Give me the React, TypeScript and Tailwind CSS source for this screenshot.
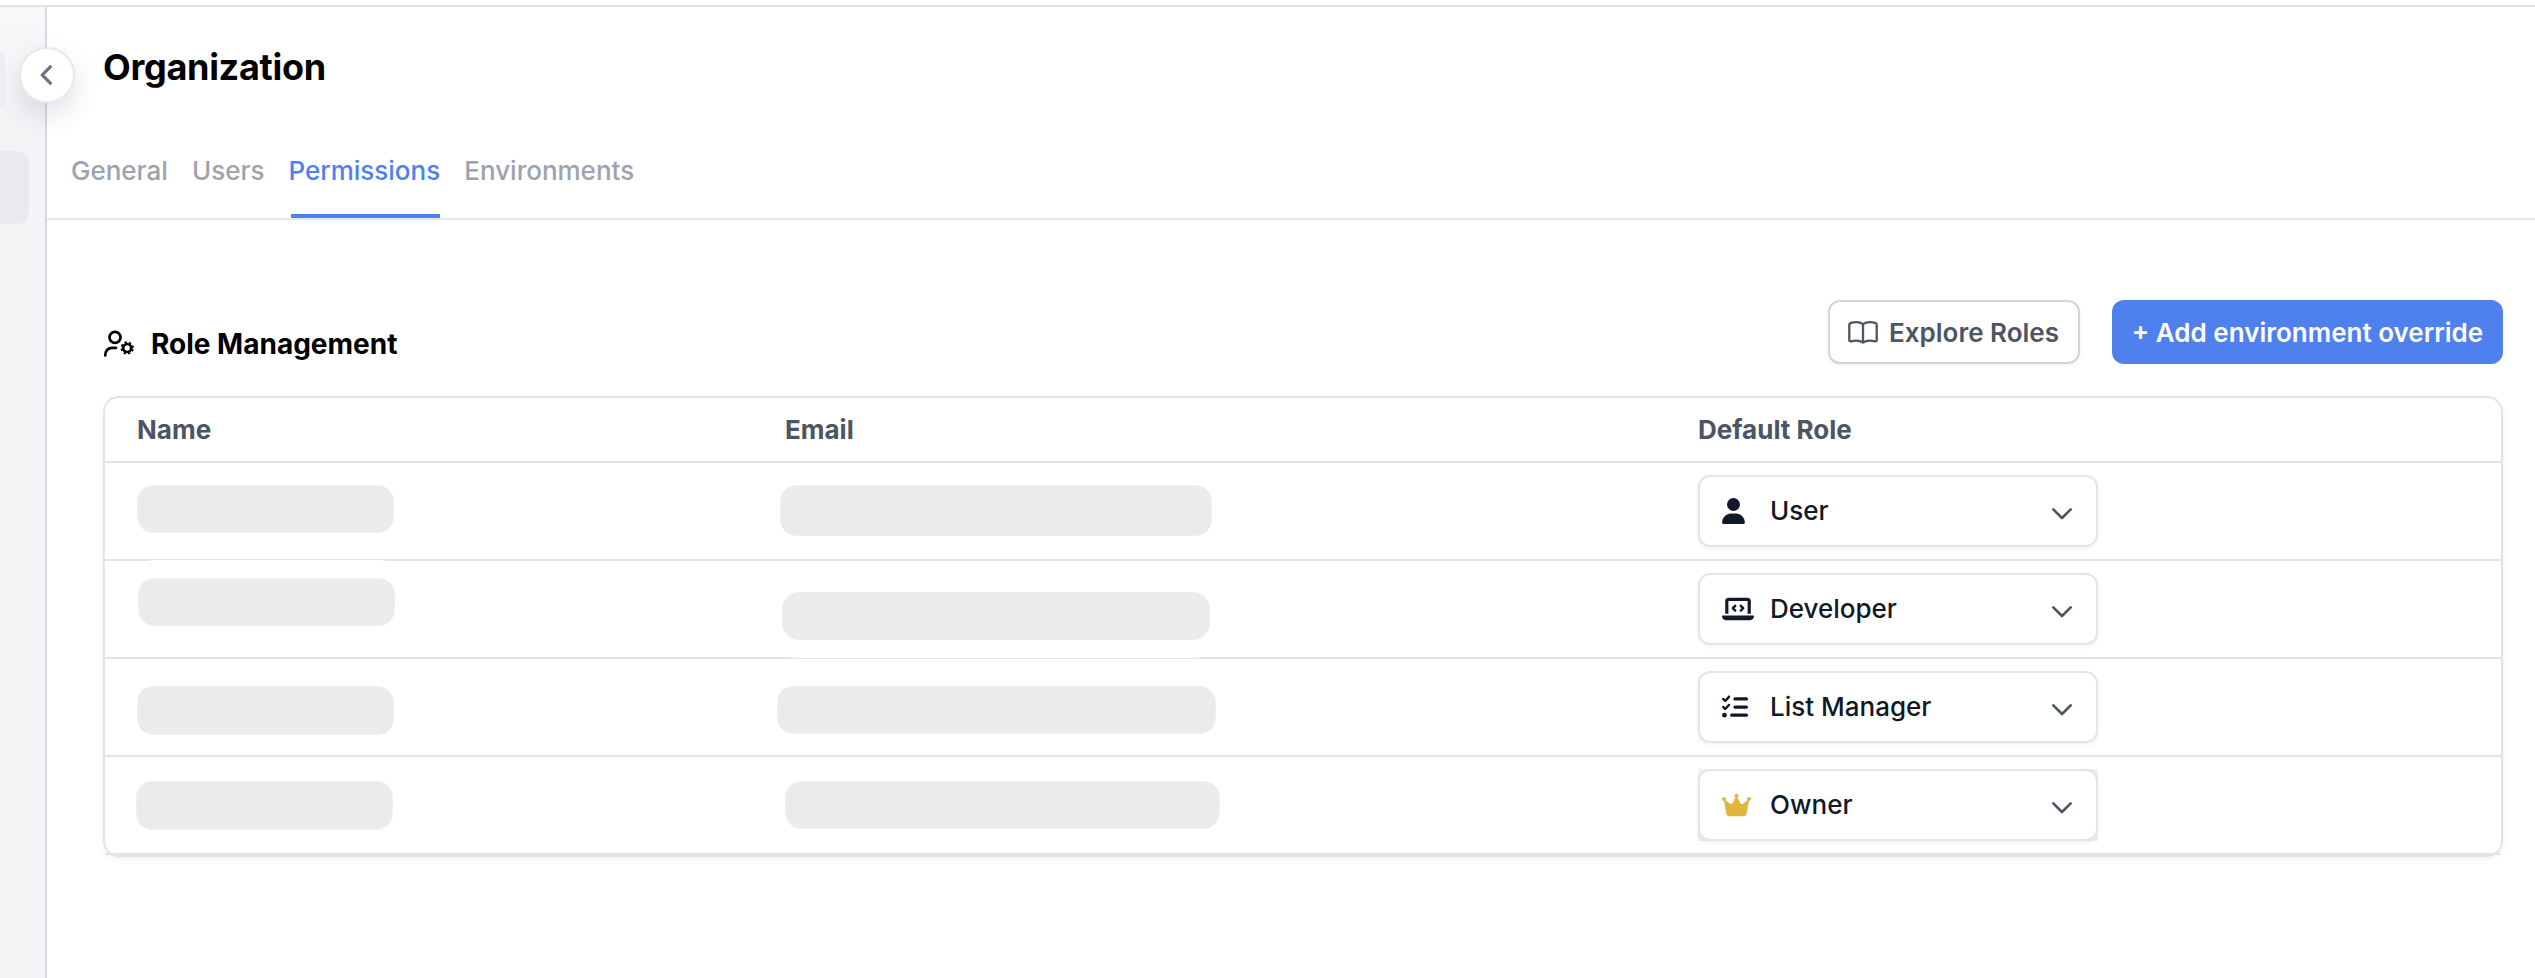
import { FaCrown, FaListCheck, FaLaptopCode, FaUser } from "react-icons/fa6";

interface Member {
  role: string;
  icon: React.ReactNode;
  nameClass: string;
  emailClass: string;
  selectClass?: string;
}

const tabs = ["General", "Users", "Permissions", "Environments"];

const members: Member[] = [
  {
    role: "User",
    icon: <FaUser className="h-[26px] w-[23px]" />,
    nameClass: "ml-8 mt-[22px] h-12 w-[257px]",
    emailClass: "-ml-1 mt-[22px] h-[51px] w-[432px]",
  },
  {
    role: "Developer",
    icon: <FaLaptopCode className="h-[26px] w-8" />,
    nameClass: "ml-[33px] mt-[17px] h-12 w-[257px]",
    emailClass: "-ml-0.5 mt-[31px] h-12 w-[428px]",
  },
  {
    role: "List Manager",
    icon: <FaListCheck className="size-[26px]" />,
    nameClass: "ml-8 mt-[27px] h-[49px] w-[257px]",
    emailClass: "-ml-[7px] mt-[27px] h-12 w-[439px]",
  },
  {
    role: "Owner",
    icon: <FaCrown className="h-[26px] w-[29px] text-[#e2b53e]" />,
    nameClass: "ml-[31px] mt-6 h-[49px] w-[257px]",
    emailClass: "ml-px mt-6 h-12 w-[435px]",
    selectClass: "bg-[#efefef]",
  },
];

function UserGearIcon() {
  return (
    <svg viewBox="0 0 32 28" className="h-7 w-8" fill="none" stroke="currentColor" strokeWidth="2.7" strokeLinecap="round">
      <circle cx="12" cy="7.4" r="5.5" />
      <path d="M2.3 25.5v-1a6.7 6.7 0 0 1 6.7-6.7h4" />
      <circle cx="24.2" cy="18" r="4" strokeWidth="2.7" />
      <circle
        cx="24.2"
        cy="18"
        r="5.7"
        strokeWidth="1.9"
        strokeLinecap="butt"
        strokeDasharray="2.24 2.24"
        transform="rotate(11.25 24.2 18)"
      />
    </svg>
  );
}

function BookIcon() {
  return (
    <svg viewBox="0 0 30 23" className="h-[23px] w-[30px]" fill="none" stroke="currentColor" strokeWidth="2.3" strokeLinejoin="round">
      <path d="M15 3.2C12.5 1.2 7 .9 2.8 1.9Q1.3 2.3 1.3 3.6V19.2Q1.3 20.6 2.9 20.3C7 19.4 12 19.4 15 21.6C18 19.4 23 19.4 27.1 20.3Q28.7 20.6 28.7 19.2V3.6Q28.7 2.3 27.2 1.9C23 .9 17.5 1.2 15 3.2ZM15 3.2V21.6" />
    </svg>
  );
}

function Skeleton({ className }: { className: string }) {
  return (
    <div className={`rounded-2xl border border-[#f0f0f0] bg-[#ebebeb] shadow-[0_0_0_18px_#fff] ${className}`} />
  );
}

function RoleSelect({ member }: { member: Member }) {
  return (
    <div className={`mt-3 h-[72px] w-[400px] ${member.selectClass ?? ""}`}>
      <button
        type="button"
        className="flex h-full w-full items-center rounded-xl border-2 border-[#e5e5e5] bg-white pl-[22px] pr-6 text-[#111827] shadow-[0_2px_4px_rgba(0,0,0,0.05)]"
      >
        <span className="flex w-8">{member.icon}</span>
        <span className="ml-4">{member.role}</span>
        <svg viewBox="0 0 20 12" className="ml-auto mt-[5px] h-3 w-5 text-[#4b5563]" fill="none" stroke="currentColor" strokeWidth="2.6" strokeLinecap="round" strokeLinejoin="round">
          <path d="M1.3 1.4 10 10l8.7-8.6" />
        </svg>
      </button>
    </div>
  );
}

export default function App() {
  return (
    <div className="flex h-[978px] flex-col bg-white pt-[5px] font-['Inter',sans-serif] text-[26px] font-medium leading-10">
      <div className="flex flex-1 border-t-2 border-[#e3e3e1]">
        <aside className="relative w-[47px] shrink-0 border-r-2 border-[#d5d8de] bg-[#f3f4f6] bg-linear-to-b from-[#f8f8fa] to-[#f3f4f6] to-[140px] pt-[43px]">
          <div className="h-[58px] w-[5px] rounded-r-xl bg-[#eeeff2]" />
          <div className="mt-[43px] h-[73px] w-[29px] rounded-r-xl bg-[#e8eaef]" />
          <button
            type="button"
            aria-label="Collapse"
            className="absolute left-[19px] top-10 flex size-14 items-center justify-center rounded-full border-2 border-[#e8e9ee] bg-white pr-0.5 text-[#6b7285] shadow-[0_12px_28px_rgba(30,41,80,0.14)]"
          >
            <svg viewBox="0 0 12 20" className="h-5 w-3" fill="none" stroke="currentColor" strokeWidth="3.2" strokeLinecap="round" strokeLinejoin="round">
              <path d="M10.3 1.8 2.2 10l8.1 8.2" />
            </svg>
          </button>
        </aside>

        <main className="flex-1 pt-10">
          <h1 className="pl-14 text-[36px] font-bold tracking-[-0.008em] text-black">Organization</h1>

          <nav className="mt-16 flex gap-6 border-b-2 border-[#e5e7eb] pl-6">
            {tabs.map((tab) => (
              <div
                key={tab}
                className={`flex h-[67px] flex-col ${tab === "Permissions" ? "text-[#4f81ee]" : "text-[#9ca3af]"}`}
              >
                <span>{tab}</span>
                {tab === "Permissions" && <span className="ml-[3px] mt-auto h-1 bg-[#4f81ee]" />}
              </div>
            ))}
          </nav>

          <section className="pl-14 pr-8 pt-20">
            <div className="flex items-end justify-between">
              <div className="flex items-center gap-4 text-black">
                <UserGearIcon />
                <h2 className="text-[28px] font-bold">Role Management</h2>
              </div>
              <div className="flex gap-8 font-semibold">
                <button
                  type="button"
                  className="flex h-16 w-[252px] items-center gap-[11px] rounded-xl border-2 border-[#d1d5db] bg-white pl-[18px] text-[#4b5563] shadow-[0_2px_4px_rgba(0,0,0,0.05)]"
                >
                  <BookIcon />
                  <span className="whitespace-nowrap pt-0.5">Explore Roles</span>
                </button>
                <button type="button" className="h-16 w-[391px] whitespace-nowrap rounded-xl bg-[#4f81ee] pt-0.5 text-white">
                  + Add environment override
                </button>
              </div>
            </div>

            <div className="mt-8 rounded-2xl border-2 border-[#e3e3e4] shadow-[0_2px_6px_rgba(0,0,0,0.06)]">
              <div className="grid h-[65px] grid-cols-[679px_914px_1fr] items-center border-b-2 border-[#e3e3e4] font-bold text-[#4b5563]">
                <span className="pl-8">Name</span>
                <span className="pl-px">Email</span>
                <span>Default Role</span>
              </div>
              {members.map((member) => (
                <div key={member.role} className="grid h-[98px] grid-cols-[679px_914px_1fr] items-start border-b-2 border-[#e3e3e4]">
                  <Skeleton className={member.nameClass} />
                  <Skeleton className={member.emailClass} />
                  <RoleSelect member={member} />
                </div>
              ))}
            </div>
          </section>
        </main>
      </div>
    </div>
  );
}
